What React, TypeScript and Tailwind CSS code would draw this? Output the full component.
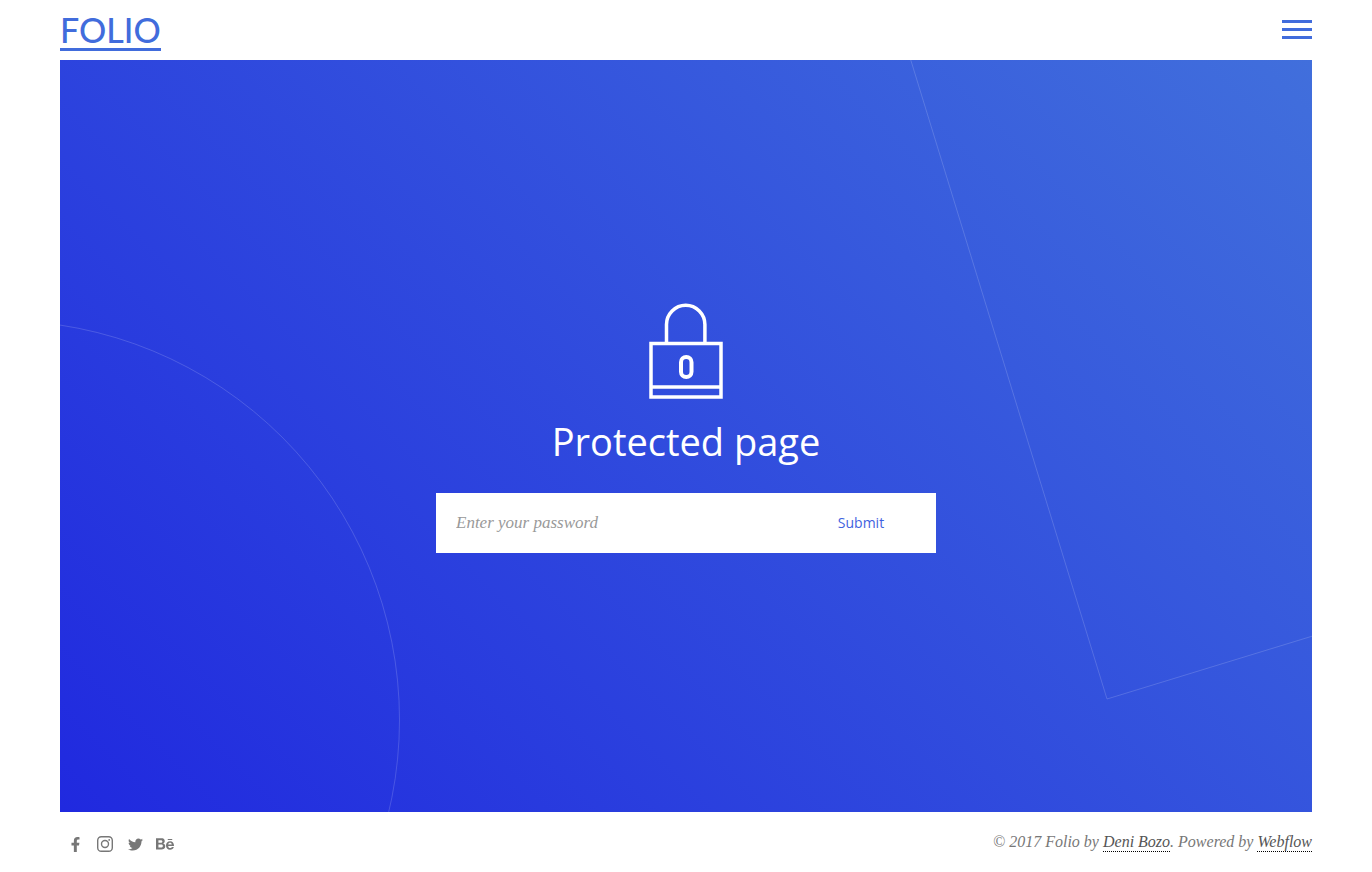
import { FaBehance, FaFacebookF, FaTwitter } from "react-icons/fa";

const InstagramIcon = () => (
  <svg viewBox="0 0 16 16" className="size-4" fill="none" stroke="currentColor" aria-hidden="true">
    <rect x="0.7" y="0.7" width="14.6" height="14.6" rx="3.6" strokeWidth="1.4" />
    <circle cx="8" cy="8" r="3.5" strokeWidth="1.4" />
    <circle cx="12.2" cy="3.9" r="0.9" fill="currentColor" stroke="none" />
  </svg>
);

const LockIcon = () => (
  <svg viewBox="0 0 74 96" className="h-24 w-[74px]" fill="none" stroke="white" strokeWidth="3.5" aria-hidden="true">
    <path d="M17.5 39V21.5a19.2 19.2 0 0 1 38.4 0V39" />
    <rect x="2" y="40.5" width="70" height="53.5" />
    <path d="M2 84h70" />
    <rect x="32" y="54" width="10.5" height="20" rx="5.2" strokeWidth="4" />
  </svg>
);

const socials = [
  { label: "Facebook", icon: <FaFacebookF className="size-[15px]" /> },
  { label: "Instagram", icon: <InstagramIcon /> },
  { label: "Twitter", icon: <FaTwitter className="size-[15px]" /> },
  { label: "Behance", icon: <FaBehance className="size-[18px]" /> },
];

const Header = () => (
  <header className="flex h-[60px] items-center justify-between pb-0.5 text-[#416cdc]">
    <a href="#" className="mt-1 border-b-[3px] border-current font-['Lato',sans-serif] text-[34px] font-medium leading-9">
      FOLIO
    </a>
    <button type="button" aria-label="Menu" className="flex w-[30px] flex-col gap-[5px]">
      <span className="h-[3px] bg-current" />
      <span className="h-[3px] bg-current" />
      <span className="h-[3px] bg-current" />
    </button>
  </header>
);

const Backdrop = () => (
  <div className="pointer-events-none absolute inset-0" aria-hidden="true">
    <svg className="absolute bottom-0 left-0 h-[492px] w-[342px]" fill="none" stroke="white" strokeOpacity="0.16">
      <circle cx="-60" cy="400" r="399.5" />
    </svg>
    <svg className="absolute right-0 top-0 h-[642px] w-[402px]" fill="none" stroke="white" strokeOpacity="0.16">
      <path d="M-2 -9L197 639L406 575" />
    </svg>
  </div>
);

const PasswordForm = () => (
  <form className="flex h-[60px] w-full max-w-[500px] bg-white" onSubmit={(e) => e.preventDefault()}>
    <input
      type="password"
      aria-label="Password"
      placeholder="Enter your password"
      className="min-w-0 flex-1 px-5 font-['Liberation_Serif',serif] text-[17px] italic outline-none placeholder:text-[#999]"
    />
    <button type="submit" className="w-[150px] text-sm text-[#3f62e0]">
      Submit
    </button>
  </form>
);

const Footer = () => (
  <footer className="flex h-[60px] items-center justify-between">
    <div className="flex pt-1 text-[#777]">
      {socials.map(({ label, icon }) => (
        <a key={label} href="#" aria-label={label} className="flex size-[30px] items-center justify-center">
          {icon}
        </a>
      ))}
    </div>
    <p className="font-['Liberation_Serif',serif] text-base italic leading-5 text-[#777]">
      © 2017 Folio by{" "}
      <a href="#" className="inline-block border-b border-dotted border-black leading-[18px] text-[#555]">
        Deni Bozo
      </a>
      . Powered by{" "}
      <a href="#" className="inline-block border-b border-dotted border-black leading-[18px] text-[#555]">
        Webflow
      </a>
    </p>
  </footer>
);

const App = () => (
  <div className="flex min-h-screen flex-col bg-white px-[60px] font-['Open_Sans',sans-serif]">
    <Header />
    <main className="relative flex flex-1 flex-col items-center justify-center overflow-hidden bg-[linear-gradient(45deg,#2029df,#416fdc)] pb-4">
      <Backdrop />
      <div className="relative flex w-full flex-col items-center">
        <LockIcon />
        <h1 className="mb-[22px] mt-3 text-[38px] leading-[60px] text-white">Protected page</h1>
        <PasswordForm />
      </div>
    </main>
    <Footer />
  </div>
);

export default App;
